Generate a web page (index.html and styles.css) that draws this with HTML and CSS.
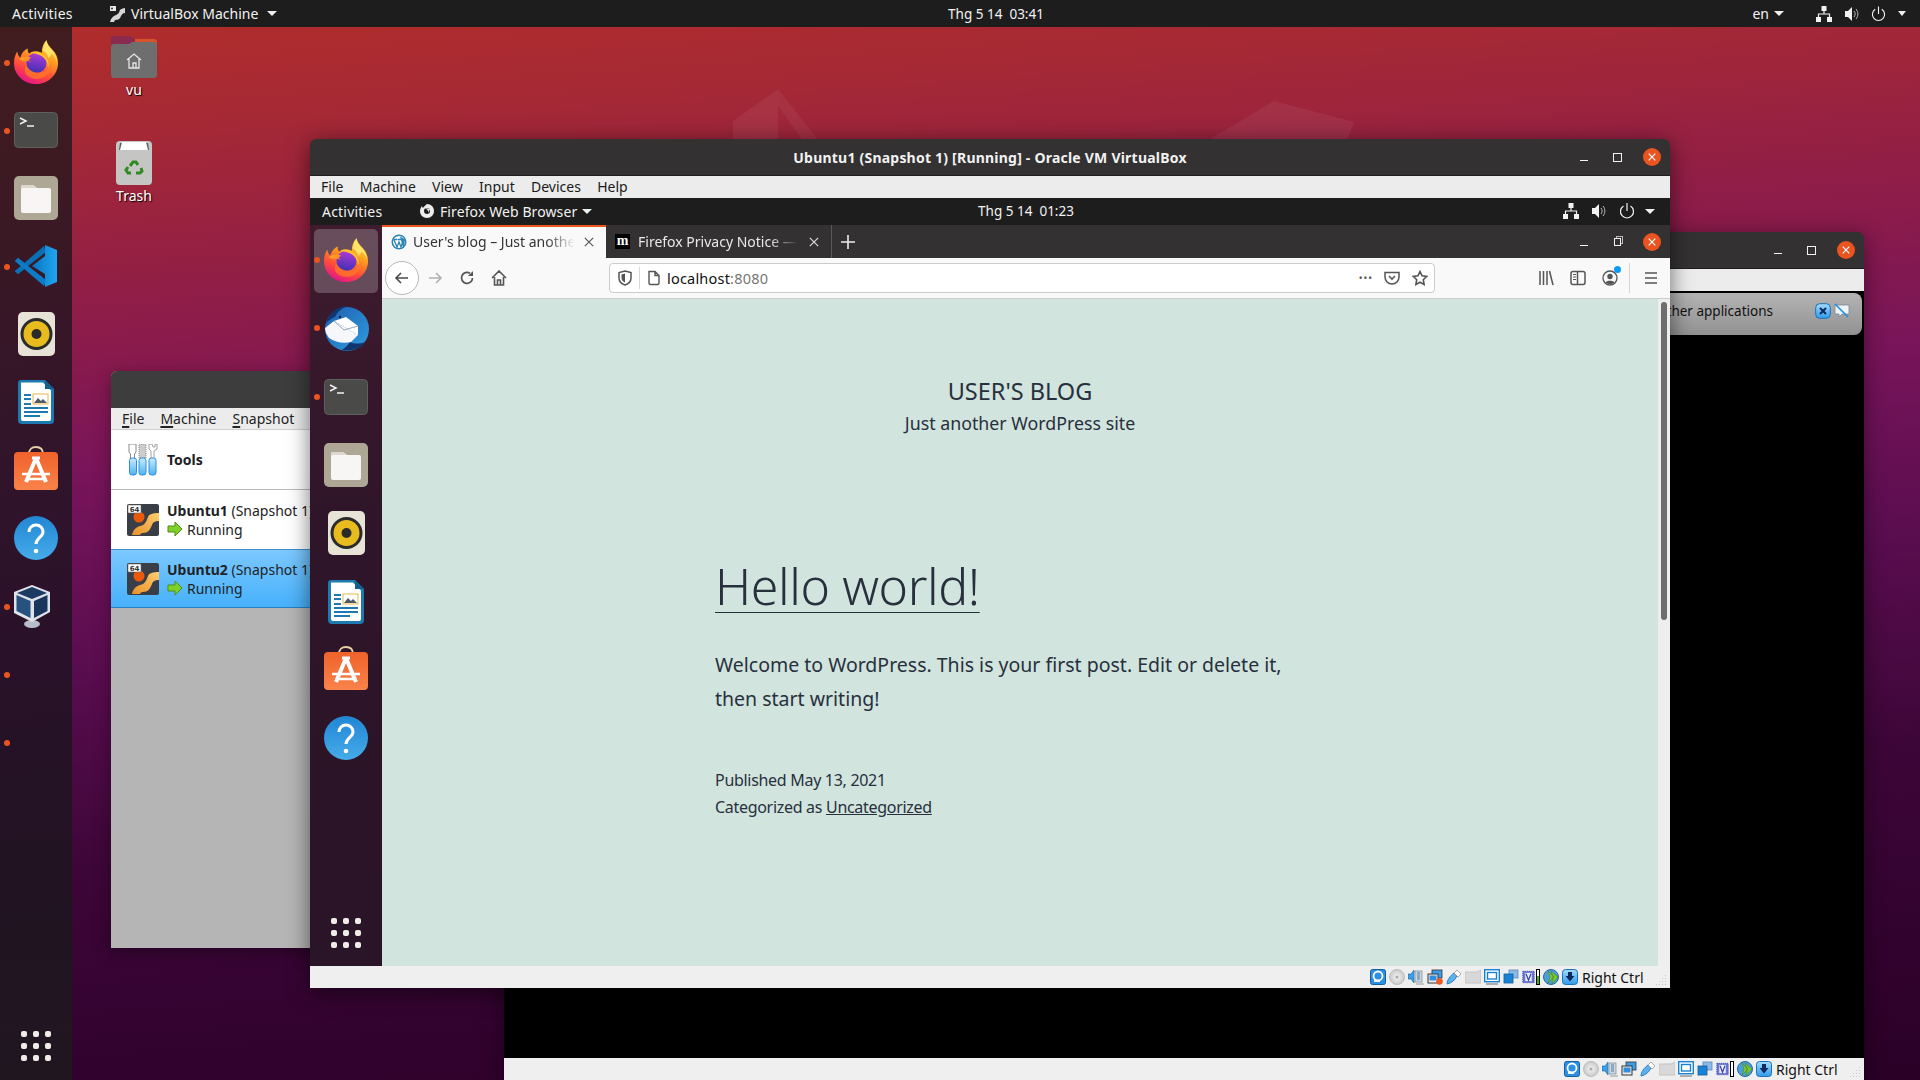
FILE: index.html
```html
<!DOCTYPE html>
<html lang="vi">
<head>
<meta charset="utf-8">
<title>Ubuntu desktop</title>
<link rel="stylesheet" href="styles.css">
</head>
<body>
<svg class="defs" width="0" height="0" aria-hidden="true">
  <defs>
    <linearGradient id="ffBody" x1="0.8" y1="0" x2="0.35" y2="1"><stop offset="0" stop-color="#ffe44d"/><stop offset="0.4" stop-color="#ff9a1f"/><stop offset="0.72" stop-color="#ff4a3c"/><stop offset="1" stop-color="#e31587"/></linearGradient>
    <linearGradient id="ffSwirl" x1="0" y1="0" x2="1" y2="1"><stop offset="0" stop-color="#ffb32b"/><stop offset="1" stop-color="#ff6a22"/></linearGradient>
    <linearGradient id="ffCore" x1="0.6" y1="0" x2="0.4" y2="1"><stop offset="0" stop-color="#b23ad6"/><stop offset="1" stop-color="#3c30b4"/></linearGradient>
    <linearGradient id="tbBird" x1="0" y1="0" x2="1" y2="1"><stop offset="0" stop-color="#1f5fae"/><stop offset="1" stop-color="#2f9de0"/></linearGradient>
    <linearGradient id="gVscode" x1="0" y1="0" x2="1" y2="0"><stop offset="0" stop-color="#0a73bd"/><stop offset="1" stop-color="#1fa6f2"/></linearGradient>
    <linearGradient id="gStore" x1="0" y1="0" x2="0" y2="1"><stop offset="0" stop-color="#f0622c"/><stop offset="1" stop-color="#f9834a"/></linearGradient>
    <linearGradient id="gHelp" x1="0" y1="0" x2="0" y2="1"><stop offset="0" stop-color="#2286d4"/><stop offset="1" stop-color="#45ace9"/></linearGradient>
    <linearGradient id="os" x1="0" y1="1" x2="1" y2="0"><stop offset="0" stop-color="#e8912a"/><stop offset="1" stop-color="#ffcd6e"/></linearGradient>
    <linearGradient id="blueBtn" x1="0" y1="0" x2="0" y2="1"><stop offset="0" stop-color="#a5dbff"/><stop offset="1" stop-color="#2f9bea"/></linearGradient>
    <linearGradient id="tool" x1="0" y1="0" x2="0" y2="1"><stop offset="0" stop-color="#c9ecff"/><stop offset="1" stop-color="#4db3f2"/></linearGradient>
    <radialGradient id="disc"><stop offset="0" stop-color="#f4f4f4"/><stop offset="1" stop-color="#c9c9c9"/></radialGradient>

    <symbol id="firefox" viewBox="0 0 48 48">
      <path fill="url(#ffBody)" d="M24 47C11 47 1 37 1 25c0-5 1.500-9 3.500-12 .5 3 1.500 5 3 6.500C9 15 12 11 15.500 10c-.5 2 0 4 1.500 5 4-2.500 9-2.500 13-.5C30 9 32 4 35 1c.5 4 3 6.500 6 10 4 4 6 9 6 14 0 12-10 22-23 22z"/>
      <circle cx="24.500" cy="25" r="10.500" fill="url(#ffCore)"/>
      <path fill="url(#ffSwirl)" d="M6 21c4-3 10-3 13-1.500-1.500 1-2.500 2-2.500 3 1.500.5 2 1 2 2.500-.5-1.500-1.500-2-3-2C12 23.500 8 22.500 6 21z"/>
      <path fill="#ff7a24" d="M13 36c4 6 13 7 19 4 5-3 9-8 8-15-1 5-5 10-11 10-7 1-12-2-15-7-2 2-2 5-1 8z" opacity=".75"/>
      <path fill="#ffc02e" d="M18 14c5-2 11-1 15 3 3 3 5 8 4 13-1-6-4-11-9-13-4-2-7-2-10-3z"/>
      <path fill="#ffe66a" d="M35 2c.5 4 3 7 6 10 3 4 5 8 5 12-1-4-3-7-6-9-1 3-2 4-3 5-1-5-4-7-6-8 .5-4 2-7 4-10z"/>
    </symbol>
    <symbol id="thunderbird" viewBox="0 0 48 48">
      <circle cx="25" cy="25" r="22" fill="url(#tbBird)"/>
      <path fill="#10356f" d="M4 20c2-11 11-18 22-18-6 2-11 6-13 11-3 1-7 3-9 7zM20 46c8 2 18-1 23-8-5 2-11 2-15 0-2 3-5 6-8 8z"/>
      <path fill="#f5f7fa" d="M3 24l9-7 24 14-7 7c-8 2-16 0-22-4-2-3-4-6-4-10z"/>
      <path fill="#fff" d="M12 17l12-4 12 9v9z"/>
      <path fill="none" stroke="#9ba8b5" stroke-width="1" d="M12 17l10 9 14-4"/>
      <circle cx="18" cy="13" r="1.200" fill="#0a1f40"/>
    </symbol>
    <symbol id="terminal" viewBox="0 0 44 36">
      <rect x="0.500" y="0.500" width="43" height="35" rx="4" fill="#4a4a48" stroke="#5f5f5d"/>
      <path d="M6 6l6 3-6 3" fill="none" stroke="#f2f2f2" stroke-width="1.500"/>
      <path d="M13 14h7" stroke="#f2f2f2" stroke-width="1.500"/>
    </symbol>
    <symbol id="files" viewBox="0 0 44 44">
      <rect width="44" height="44" rx="5" fill="#aea795"/>
      <path d="M7 11a2 2 0 0 1 2-2h10l4 3h12a2 2 0 0 1 2 2v21a2 2 0 0 1-2 2H9a2 2 0 0 1-2-2z" fill="#f8f6f4"/>
      <path d="M7 14a2 2 0 0 1 2-2h13l-3-3H9a2 2 0 0 0-2 2z" fill="#dcd8cf"/>
    </symbol>
    <symbol id="rhythmbox" viewBox="0 0 37 44">
      <rect width="37" height="44" rx="5" fill="#e7e3d7"/>
      <circle cx="18.500" cy="22" r="16" fill="#2b2b2b"/>
      <circle cx="18.500" cy="22" r="13" fill="#e8bc1e"/>
      <circle cx="18.500" cy="22" r="5" fill="#2a2a2a"/>
    </symbol>
    <symbol id="writer" viewBox="0 0 36 44">
      <path d="M3 0h24l9 9v31a4 4 0 0 1-4 4H4a4 4 0 0 1-4-4V3a3 3 0 0 1 3-3z" fill="#1d7ab0"/>
      <path d="M3 2.500h22l8 8V39a2 2 0 0 1-2 2H5a2 2 0 0 1-2-2z" fill="#fff"/>
      <path d="M27 0l9 9h-9z" fill="#13608e"/>
      <rect x="15" y="14" width="15" height="10" fill="#fff" stroke="#e5b84b"/>
      <path d="M16 23l4-5 3 3 2-2 4 4z" fill="#4f5a66"/>
      <path d="M6 15h7M6 19h7M6 24h7M6 28h24M6 32h24M6 36h16" stroke="#1d7ab0" stroke-width="1.800"/>
    </symbol>
    <symbol id="store" viewBox="0 0 44 44">
      <path d="M15 8c0-5 3-7 7-7s7 2 7 7" fill="none" stroke="#e7cfa8" stroke-width="1.800"/>
      <rect y="6" width="44" height="38" rx="4" fill="url(#gStore)"/>
      <path d="M22 12L12 36M22 12l10 24" stroke="#fff" stroke-width="4" fill="none"/>
      <path d="M8 28h28M12 33h20" stroke="#fff" stroke-width="2.400"/>
      <path d="M18 12h8" stroke="#fff" stroke-width="3"/>
    </symbol>
    <symbol id="help" viewBox="0 0 44 44">
      <circle cx="22" cy="22" r="22" fill="url(#gHelp)"/>
      <path d="M15 16c0-4 3-7 7-7s7 3 7 7c0 5-7 6-7 12" fill="none" stroke="#fff" stroke-width="3"/>
      <circle cx="22" cy="35" r="2.300" fill="#fff"/>
    </symbol>
    <symbol id="vscode" viewBox="0 0 42 42">
      <path fill="#0e7ac4" d="M0 16l3-3 10 8-10 8-3-3 6-5z"/>
      <path fill="#0a6fb5" d="M3 29l-3-3L29 1l2 6z"/>
      <path fill="#0c7cc9" d="M3 13l-3 3 29 25 2-6z"/>
      <path fill="url(#gVscode)" d="M30 0l12 5v32l-12 5V29L17 21l13-10z"/>
    </symbol>
    <symbol id="vbox" viewBox="0 0 40 44">
      <ellipse cx="19" cy="40" rx="8" ry="4" fill="#b7bdc9"/>
      <path d="M19 1l18 7v20l-18 10-18-9V8z" fill="#dfe3ea"/>
      <path d="M19 3l15 6-15 6-15-6z" fill="#1d3a63"/>
      <path d="M3.500 11l14 6v17l-14-7z" fill="#27517f"/>
      <path d="M21 17l13.500-6v16L21 34z" fill="#1b365c"/>
    </symbol>
    <symbol id="grid" viewBox="0 0 30 30">
      <g fill="#f0ece8"><rect x="0" y="0" width="6" height="6" rx="2"/><rect x="12" y="0" width="6" height="6" rx="2"/><rect x="24" y="0" width="6" height="6" rx="2"/><rect x="0" y="12" width="6" height="6" rx="2"/><rect x="12" y="12" width="6" height="6" rx="2"/><rect x="24" y="12" width="6" height="6" rx="2"/><rect x="0" y="24" width="6" height="6" rx="2"/><rect x="12" y="24" width="6" height="6" rx="2"/><rect x="24" y="24" width="6" height="6" rx="2"/></g>
    </symbol>
    <symbol id="home-folder" viewBox="0 0 46 42">
      <path d="M3 0h16l4 3h20a3 3 0 0 1 3 3v8H0V3a3 3 0 0 1 3-3z" fill="#8a2a4e"/>
      <path d="M24 3h19a3 3 0 0 1 3 3v6H24z" fill="#d8532a"/>
      <path d="M3 8h15l3-2h22a3 3 0 0 1 3 3v30a3 3 0 0 1-3 3H3a3 3 0 0 1-3-3V11a3 3 0 0 1 3-3z" fill="#6e6e6e"/>
      <path d="M16 24l7-6 7 6M18 23v9h10v-9M22 32v-5h3v5" fill="none" stroke="#e7e7e7" stroke-width="1.300"/>
    </symbol>
    <symbol id="trash" viewBox="0 0 36 44">
      <rect width="36" height="44" rx="4" fill="#c5c5c3"/>
      <path d="M4 2h28l1 7H3z" fill="#5b5b5b"/>
      <path d="M6 1h24l2 8H4z" fill="#fff"/>
      <g fill="none" stroke="#2e8b22" stroke-width="3"><path d="M14 25l3-4h3l2 3"/><path d="M25 27l1 3-2 2h-4"/><path d="M15 32h-3l-2-3 2-3"/></g>
    </symbol>
    <symbol id="tb-tools" viewBox="0 0 32 32">
      <path d="M2 0h7v8l-1.500 2v5h-4v-5L2 8z" fill="#fff" stroke="#8a8a8a"/>
      <rect x="12" y="0" width="7" height="14" fill="#ccc" stroke="#8a8a8a" stroke-dasharray="1 1"/>
      <path d="M22 0v5l2 2v8h3V7l3-2V0l-2 0v3h-2l-1-3z" fill="#fff" stroke="#8a8a8a" stroke-width=".8"/>
      <rect x="2.500" y="14" width="7" height="17" rx="2.500" fill="url(#tool)" stroke="#2f8ed9"/>
      <rect x="12" y="14" width="7" height="17" rx="2.500" fill="url(#tool)" stroke="#2f8ed9"/>
      <rect x="22" y="14" width="7" height="17" rx="2.500" fill="url(#tool)" stroke="#2f8ed9"/>
    </symbol>
    <symbol id="os64" viewBox="0 0 32 32">
      <rect width="32" height="32" rx="2" fill="#3a3f47"/>
      <path d="M5 31c1-5 4-8 8-9 5-1 6-4 8-9 1-3 5-4 11-4v8c-4 0-6 1-7 4-2 5-4 8-9 8-2 0-3 1-3 2z" fill="url(#os)"/>
      <circle cx="12" cy="13" r="5.500" fill="#ea5a0a"/>
      <rect x="1" y="1" width="13" height="8" fill="#fff" stroke="#666" stroke-width=".6"/>
      <text x="7.500" y="7.800" class="os64-label">64</text>
    </symbol>
    <symbol id="run-arrow" viewBox="0 0 16 14">
      <path d="M1 4h7V0l7 7-7 7v-4H1z" fill="#7fd02a" stroke="#4f8f12"/>
    </symbol>
    <symbol id="wp" viewBox="0 0 16 16">
      <circle cx="8" cy="8" r="7.500" fill="#2a84b5"/>
      <circle cx="8" cy="8" r="6" fill="#fff"/>
      <path d="M3 6l3 7 2-5 2 5 2.500-7M2.500 5.500h4M7 5.500h4" fill="none" stroke="#2a84b5" stroke-width="1.300"/>
      <path d="M9 2.500l5 3-1 7-1 1z" fill="#2a84b5"/>
    </symbol>
    <symbol id="close-x" viewBox="0 0 12 12"><path d="M1 1l10 10M11 1L1 11" fill="none" stroke="currentColor" stroke-width="1.400"/></symbol>
    <symbol id="wclose" viewBox="0 0 18 18"><circle cx="9" cy="9" r="9" fill="#e95420"/><path d="M5.700 5.700l6.600 6.600M12.300 5.700l-6.600 6.600" stroke="#fff" stroke-width="1.200"/></symbol>
    <symbol id="net" viewBox="0 0 16 16"><g fill="#f2f2f2"><rect x="5.500" y="0" width="5" height="5"/><rect x="0" y="11" width="5" height="5"/><rect x="11" y="11" width="5" height="5"/></g><path d="M8 5v3M2.500 11V8h11v3" fill="none" stroke="#f2f2f2" stroke-width="1.200"/></symbol>
    <symbol id="sound" viewBox="0 0 16 16"><path d="M1 5h3l4-4v14l-4-4H1z" fill="#f2f2f2"/><path d="M10 5c1.500 2 1.500 4 0 6M12 3c2.500 3 2.500 7 0 10" fill="none" stroke="#bbb" stroke-width="1"/></symbol>
    <symbol id="power" viewBox="0 0 16 16"><path d="M8 0v8" stroke="#f2f2f2" stroke-width="1.200"/><path d="M4.500 3a6.500 6.500 0 1 0 7 0" fill="none" stroke="#f2f2f2" stroke-width="1.200"/></symbol>

    <symbol id="i-back" viewBox="0 0 16 16"><path d="M14 8H2M7 3L2 8l5 5" fill="none" stroke="currentColor" stroke-width="1.600"/></symbol>
    <symbol id="i-fwd" viewBox="0 0 16 16"><path d="M2 8h12M9 3l5 5-5 5" fill="none" stroke="currentColor" stroke-width="1.600"/></symbol>
    <symbol id="i-reload" viewBox="0 0 16 16"><path d="M13.500 8A5.500 5.500 0 1 1 11 3.300" fill="none" stroke="currentColor" stroke-width="1.700"/><path d="M14 1v5h-5z" fill="currentColor"/></symbol>
    <symbol id="i-home" viewBox="0 0 16 16"><path d="M1 8l7-7 7 7M3.500 7v8h9V7M6.500 15v-5h3v5" fill="none" stroke="currentColor" stroke-width="1.600"/></symbol>
    <symbol id="i-shield" viewBox="0 0 16 16"><path d="M8 1l6 1.500V8c0 4-3 6-6 7-3-1-6-3-6-7V2.500z" fill="none" stroke="currentColor" stroke-width="1.500"/><path d="M8 3.500v9c-2-1-3.500-2-3.500-5V4.500z" fill="currentColor"/></symbol>
    <symbol id="i-page" viewBox="0 0 16 16"><path d="M3 1.500h6l4 4V13a1.500 1.500 0 0 1-1.500 1.500h-7A1.500 1.500 0 0 1 3 13zM9 1.500v4h4" fill="none" stroke="currentColor" stroke-width="1.400"/></symbol>
    <symbol id="i-pocket" viewBox="0 0 16 16"><path d="M1 2.500h14V7a7 7 0 0 1-14 0z" fill="none" stroke="currentColor" stroke-width="1.500"/><path d="M5 6l3 3 3-3" fill="none" stroke="currentColor" stroke-width="1.600"/></symbol>
    <symbol id="i-star" viewBox="0 0 16 16"><path d="M8 1.500l2 4.300 4.700.6-3.400 3.300.8 4.700L8 12.200l-4.100 2.200.8-4.700L1.300 6.400 6 5.800z" fill="none" stroke="currentColor" stroke-width="1.600"/></symbol>
    <symbol id="i-library" viewBox="0 0 16 16"><path d="M2 1v14M5.500 1v14M9 1v14M11.500 1l3.500 14" fill="none" stroke="currentColor" stroke-width="1.500"/></symbol>
    <symbol id="i-sidebar" viewBox="0 0 16 16"><rect x="1" y="1.500" width="14" height="13" rx="2" fill="none" stroke="currentColor" stroke-width="1.500"/><path d="M7.500 2v12" stroke="currentColor" stroke-width="1.500"/><path d="M3 4.500h3M3 7h3M3 9.500h3" stroke="currentColor" stroke-width="1.200"/></symbol>
    <symbol id="i-account" viewBox="0 0 16 16"><circle cx="8" cy="8" r="7" fill="none" stroke="currentColor" stroke-width="1.300"/><circle cx="8" cy="6.500" r="2.700" fill="currentColor"/><path d="M3.500 12.500c1-2.500 8-2.500 9 0-2 2-7 2-9 0z" fill="currentColor"/></symbol>
    <symbol id="i-menu" viewBox="0 0 16 16"><path d="M2 3h12M2 8h12M2 13h12" stroke="currentColor" stroke-width="1.700"/></symbol>

    <symbol id="s-hd" viewBox="0 0 16 16"><rect x=".5" y=".5" width="15" height="15" rx="2" fill="#2d8fe3" stroke="#12609f"/><circle cx="8" cy="7" r="4.500" fill="none" stroke="#fff" stroke-width="1.800"/><path d="M4 12h6" stroke="#fff" stroke-width="1.800"/></symbol>
    <symbol id="s-cd" viewBox="0 0 16 16"><circle cx="8" cy="8" r="7.500" fill="url(#disc)" stroke="#bdbdbd"/><circle cx="8" cy="8" r="1.500" fill="#aaa"/></symbol>
    <symbol id="s-audio" viewBox="0 0 16 16"><path d="M0 5h3l3-4v13l-3-4H0z" fill="#3d9ee8" stroke="#1768a8" stroke-width=".6"/><rect x="7" y="2" width="7" height="11" fill="#c9d7e3" stroke="#7b8a96" stroke-width=".7"/><path d="M9 4h3M9 6h3M9 8h3M9 10h3" stroke="#5d7a92"/><path d="M8 15h8" stroke="#999"/></symbol>
    <symbol id="s-net" viewBox="0 0 16 16"><rect x="5" y="1" width="10" height="8" fill="#3d9ee8" stroke="#333" stroke-width=".8"/><rect x="1" y="5" width="10" height="9" fill="#eee" stroke="#333"/><rect x="2.500" y="6.500" width="7" height="5" fill="#2f8ee0"/></symbol>
    <symbol id="s-net-on" viewBox="0 0 16 16"><use href="#s-net"/><circle cx="12.500" cy="12.500" r="3.300" fill="#ee5a24"/></symbol>
    <symbol id="s-usb" viewBox="0 0 16 16"><path d="M1 15c0-4 3-8 7-11l3 3c-2 4-5 7-10 8z" fill="#5cb0ef" stroke="#1b6eb2" stroke-width=".8"/><path d="M8 4l3-3 4 4-3 3z" fill="#fff" stroke="#888" stroke-width=".7"/></symbol>
    <symbol id="s-folder" viewBox="0 0 16 16"><path d="M0 3h12l4-2v13H0z" fill="#d8d8d8" stroke="#c4c4c4"/></symbol>
    <symbol id="s-display" viewBox="0 0 16 16"><rect x=".7" y=".7" width="14.600" height="12" fill="#fff" stroke="#1a82d4" stroke-width="1.400"/><rect x="3.500" y="3.500" width="9" height="6.500" fill="#fff" stroke="#1a82d4" stroke-width="1.400"/><path d="M2 15h12" stroke="#999" stroke-width="1.500"/></symbol>
    <symbol id="s-multi" viewBox="0 0 16 16"><rect x="6" y="1" width="9" height="8" fill="#8db9e8" stroke="#5a87ba" stroke-width=".8"/><rect x="1" y="5" width="9" height="9" fill="#1a82d4" stroke="#0f5d9d" stroke-width=".8"/></symbol>
    <symbol id="s-v" viewBox="0 0 16 16"><rect x="1" y="1" width="14" height="14" fill="#6a77d8" stroke="#3743a5" stroke-dasharray="1.500 1"/><rect x="4" y="3" width="8" height="10" fill="#eef"/><path d="M5 4l3 8 3-8" fill="none" stroke="#3743a5" stroke-width="1.500"/></symbol>
    <symbol id="s-globe" viewBox="0 0 16 16"><circle cx="8" cy="8" r="7.500" fill="#4b9fdc" stroke="#22699f"/><path d="M5 2l6 6-6 6 2-6zM8 2l7 6-6 7 1-7z" fill="#79c63a" stroke="#3f7f14" stroke-width=".5"/></symbol>
    <symbol id="s-down" viewBox="0 0 16 16"><rect x=".5" y=".5" width="15" height="15" rx="3" fill="url(#blueBtn)" stroke="#1a72b8"/><path d="M6 3h4v4h2.500L8 12.500 3.500 7H6z" fill="#0f2a5e"/></symbol>
    <symbol id="grip" viewBox="0 0 12 12"><g fill="#c6c6c6"><rect x="10" y="1" width="1" height="1"/><rect x="7" y="4" width="1" height="1"/><rect x="10" y="4" width="1" height="1"/><rect x="4" y="7" width="1" height="1"/><rect x="7" y="7" width="1" height="1"/><rect x="10" y="7" width="1" height="1"/><rect x="1" y="10" width="1" height="1"/><rect x="4" y="10" width="1" height="1"/><rect x="7" y="10" width="1" height="1"/><rect x="10" y="10" width="1" height="1"/></g></symbol>
  </defs>
</svg>

<div class="screen">
  <svg class="wall-shapes" viewBox="0 0 1920 1080" aria-hidden="true">
    <path d="M733 121L778 89V145H733z" fill="#fff" opacity=".06"/>
    <path d="M778 89L822 145H806L778 106z" fill="#fff" opacity=".05"/>
    <path d="M1274 101L1354 122 1345 145H1200z" fill="#fff" opacity=".06"/>
  </svg>

  <header class="topbar">
    <span class="tb-activities">Activities</span>
    <span class="tb-app">
      <svg class="tb-app-icon" viewBox="0 0 16 16"><path d="M1 0h6v5H1z" fill="#e8e8e8"/><path d="M1 16c1-4 3-6 6-7 3-1 3-3 4-5 1-1 3-2 5-2v5c-2 0-3 1-4 3-1 3-3 4-6 4l-1 2z" fill="#d5d5d5"/><circle cx="3" cy="2.500" r="1" fill="#333"/></svg>
      VirtualBox Machine<i class="caret"></i>
    </span>
    <span class="tb-clock">Thg 5 14&nbsp; 03:41</span>
    <span class="tb-right">
      <span class="tb-lang">en<i class="caret"></i></span>
      <svg class="tray tray-net"><use href="#net"/></svg>
      <svg class="tray tray-sound"><use href="#sound"/></svg>
      <svg class="tray tray-power"><use href="#power"/></svg>
      <i class="caret tray-caret"></i>
    </span>
  </header>

  <div class="workspace">
    <nav class="dock">
      <div class="slot running"><svg class="ic ic-ff"><use href="#firefox"/></svg></div>
      <div class="slot running"><svg class="ic ic-term"><use href="#terminal"/></svg></div>
      <div class="slot"><svg class="ic ic-44"><use href="#files"/></svg></div>
      <div class="slot running"><svg class="ic ic-42"><use href="#vscode"/></svg></div>
      <div class="slot"><svg class="ic ic-rb"><use href="#rhythmbox"/></svg></div>
      <div class="slot"><svg class="ic ic-wr"><use href="#writer"/></svg></div>
      <div class="slot"><svg class="ic ic-44 ic-store"><use href="#store"/></svg></div>
      <div class="slot"><svg class="ic ic-44"><use href="#help"/></svg></div>
      <div class="slot running slot-vbox"><svg class="ic ic-vb"><use href="#vbox"/></svg></div>
      <div class="slot running"></div>
      <div class="slot running"></div>
      <div class="dock-apps"><svg class="ic ic-grid"><use href="#grid"/></svg></div>
    </nav>

    <div class="canvas">
      <div class="desk-icon desk-home">
        <svg class="desk-home-ic"><use href="#home-folder"/></svg>
        <span class="desk-label">vu</span>
      </div>
      <div class="desk-icon desk-trash">
        <svg class="desk-trash-ic"><use href="#trash"/></svg>
        <span class="desk-label">Trash</span>
      </div>

      <!-- VirtualBox manager, behind the main VM window -->
      <section class="win win-manager">
        <div class="mgr-title"></div>
        <div class="mgr-menu">
          <span><u>F</u>ile</span><span><u>M</u>achine</span><span><u>S</u>napshot</span>
        </div>
        <div class="mgr-tools">
          <svg class="mgr-ic"><use href="#tb-tools"/></svg><b>Tools</b>
        </div>
        <div class="mgr-vm">
          <svg class="mgr-ic"><use href="#os64"/></svg>
          <div class="mgr-vm-text">
            <div class="mgr-vm-name"><b>Ubuntu1</b> (Snapshot 1)</div>
            <div class="mgr-vm-state"><svg class="run-ic"><use href="#run-arrow"/></svg>Running</div>
          </div>
        </div>
        <div class="mgr-vm mgr-vm-sel">
          <svg class="mgr-ic"><use href="#os64"/></svg>
          <div class="mgr-vm-text">
            <div class="mgr-vm-name"><b>Ubuntu2</b> (Snapshot 1)</div>
            <div class="mgr-vm-state"><svg class="run-ic"><use href="#run-arrow"/></svg>Running</div>
          </div>
        </div>
        <div class="mgr-empty"></div>
      </section>

      <!-- Second VM window, behind the main VM window -->
      <section class="win win-back">
        <div class="win-title">
          <span class="win-btns">
            <i class="btn-min"></i><i class="btn-max"></i><svg class="btn-close"><use href="#wclose"/></svg>
          </span>
        </div>
        <div class="vm-menu"></div>
        <div class="back-body">
          <div class="back-note">
            <span>other applications</span>
            <span class="note-icons">
              <svg class="note-x" viewBox="0 0 16 16"><rect x=".7" y=".7" width="14.600" height="14.600" rx="4" fill="url(#blueBtn)" stroke="#1a72b8"/><path d="M5 5l6 6M11 5l-6 6" stroke="#0f2a5e" stroke-width="2"/></svg>
              <svg class="note-msg" viewBox="0 0 16 16"><path d="M1 2h14v9H8l-3 3v-3H1z" fill="#eef3f8" stroke="#7c8791" stroke-width=".8"/><path d="M1 1l13 13" stroke="#1d8ee0" stroke-width="1.600"/></svg>
            </span>
          </div>
        </div>
        <div class="status">
          <svg class="st"><use href="#s-hd"/></svg><svg class="st"><use href="#s-cd"/></svg><svg class="st"><use href="#s-audio"/></svg><svg class="st"><use href="#s-net"/></svg><svg class="st"><use href="#s-usb"/></svg><svg class="st"><use href="#s-folder"/></svg><svg class="st"><use href="#s-display"/></svg><svg class="st"><use href="#s-multi"/></svg><span class="st-v"><svg class="st-vi"><use href="#s-v"/></svg><i class="st-bar"></i></span><svg class="st"><use href="#s-globe"/></svg><svg class="st"><use href="#s-down"/></svg>
          <span class="st-text">Right Ctrl</span>
          <svg class="st-grip"><use href="#grip"/></svg>
        </div>
      </section>

      <!-- Main VM window -->
      <section class="win win-main">
        <div class="win-title">
          <span class="win-title-text">Ubuntu1 (Snapshot 1) [Running] - Oracle VM VirtualBox</span>
          <span class="win-btns">
            <i class="btn-min"></i><i class="btn-max"></i><svg class="btn-close"><use href="#wclose"/></svg>
          </span>
        </div>
        <div class="vm-menu">
          <span>File</span><span>Machine</span><span>View</span><span>Input</span><span>Devices</span><span>Help</span>
        </div>

        <div class="guest">
          <div class="guest-panel">
            <span class="gp-activities">Activities</span>
            <span class="gp-app">
              <svg class="gp-app-ic" viewBox="0 0 16 16"><path d="M8 1c4 0 7 3 7 7s-3 7-7 7-7-3-7-7c0-2 1-4 2-5 0 1 1 2 1 2 1-2 3-3 4-4z" fill="#eee"/><circle cx="8" cy="8" r="3" fill="#1d1d1d"/><path d="M6 5l5 1-2 4c1-2-1-4-3-5z" fill="#eee"/></svg>
              Firefox Web Browser<i class="caret"></i>
            </span>
            <span class="gp-clock">Thg 5 14&nbsp; 01:23</span>
            <span class="gp-right">
              <svg class="tray"><use href="#net"/></svg>
              <svg class="tray"><use href="#sound"/></svg>
              <svg class="tray"><use href="#power"/></svg>
              <i class="caret"></i>
            </span>
          </div>

          <div class="guest-body">
            <nav class="gdock">
              <div class="gslot running active"><svg class="ic ic-ff"><use href="#firefox"/></svg></div>
              <div class="gslot running"><svg class="ic ic-tb"><use href="#thunderbird"/></svg></div>
              <div class="gslot running"><svg class="ic ic-term"><use href="#terminal"/></svg></div>
              <div class="gslot"><svg class="ic ic-44"><use href="#files"/></svg></div>
              <div class="gslot"><svg class="ic ic-rb"><use href="#rhythmbox"/></svg></div>
              <div class="gslot"><svg class="ic ic-wr"><use href="#writer"/></svg></div>
              <div class="gslot"><svg class="ic ic-44 ic-store"><use href="#store"/></svg></div>
              <div class="gslot"><svg class="ic ic-44"><use href="#help"/></svg></div>
              <div class="gdock-apps"><svg class="ic ic-grid"><use href="#grid"/></svg></div>
            </nav>

            <div class="browser">
              <div class="tabbar">
                <div class="tab tab-active">
                  <svg class="tab-ic"><use href="#wp"/></svg>
                  <span class="tab-text">User's blog – Just another</span>
                  <svg class="tab-close"><use href="#close-x"/></svg>
                </div>
                <div class="tab tab-idle">
                  <span class="moz">m</span>
                  <span class="tab-text">Firefox Privacy Notice —</span>
                  <svg class="tab-close"><use href="#close-x"/></svg>
                </div>
                <svg class="tab-new" viewBox="0 0 14 14"><path d="M7 0v14M0 7h14" stroke="#eee" stroke-width="1.600"/></svg>
                <span class="win-btns browser-btns">
                  <i class="btn-min"></i><i class="btn-restore"></i><svg class="btn-close"><use href="#wclose"/></svg>
                </span>
              </div>

              <div class="toolbar">
                <span class="nav-back"><svg class="tbi"><use href="#i-back"/></svg></span>
                <svg class="tbi tbi-fwd"><use href="#i-fwd"/></svg>
                <svg class="tbi tbi-reload"><use href="#i-reload"/></svg>
                <svg class="tbi tbi-home"><use href="#i-home"/></svg>
                <div class="urlbar">
                  <svg class="tbi"><use href="#i-shield"/></svg>
                  <i class="url-sep"></i>
                  <svg class="tbi tbi-page"><use href="#i-page"/></svg>
                  <span class="url-text">localhost<span class="url-port">:8080</span></span>
                  <span class="url-dots">•••</span>
                  <svg class="tbi"><use href="#i-pocket"/></svg>
                  <svg class="tbi tbi-star"><use href="#i-star"/></svg>
                </div>
                <div class="tools-right">
                  <svg class="tbi"><use href="#i-library"/></svg>
                  <svg class="tbi"><use href="#i-sidebar"/></svg>
                  <span class="acct"><svg class="tbi"><use href="#i-account"/></svg><i class="acct-dot"></i></span>
                  <i class="tools-sep"></i>
                  <svg class="tbi"><use href="#i-menu"/></svg>
                </div>
              </div>

              <div class="viewport">
                <main class="page">
                  <header class="site-head">
                    <div class="site-name">USER'S BLOG</div>
                    <div class="site-tag">Just another WordPress site</div>
                  </header>
                  <article class="post">
                    <h1 class="post-title"><a href="#">Hello world!</a></h1>
                    <p class="post-body">Welcome to WordPress. This is your first post. Edit or delete it,<br>then start writing!</p>
                    <p class="post-meta">Published May 13, 2021<br>Categorized as <a href="#">Uncategorized</a></p>
                  </article>
                </main>
                <div class="scrollbar"><i class="thumb"></i></div>
              </div>
            </div>
          </div>
        </div>

        <div class="status">
          <svg class="st"><use href="#s-hd"/></svg><svg class="st"><use href="#s-cd"/></svg><svg class="st"><use href="#s-audio"/></svg><svg class="st"><use href="#s-net-on"/></svg><svg class="st"><use href="#s-usb"/></svg><svg class="st"><use href="#s-folder"/></svg><svg class="st"><use href="#s-display"/></svg><svg class="st"><use href="#s-multi"/></svg><span class="st-v"><svg class="st-vi"><use href="#s-v"/></svg><i class="st-bar st-bar-on"></i></span><svg class="st"><use href="#s-globe"/></svg><svg class="st"><use href="#s-down"/></svg>
          <span class="st-text">Right Ctrl</span>
          <svg class="st-grip"><use href="#grip"/></svg>
        </div>
      </section>
    </div>
  </div>
</div>
</body>
</html>
```
FILE: styles.css
```css
* { box-sizing: border-box; }
html, body { margin: 0; padding: 0; }
body { font-family: "Noto Sans", "Open Sans", sans-serif; font-size: 14px; color: #222; overflow: hidden; }
.defs { position: absolute; }
i { display: block; font-style: normal; }
svg { display: block; flex: none; }
.os64-label { font: 700 7px "DejaVu Sans", sans-serif; fill: #333; text-anchor: middle; }

.screen {
  position: relative;
  width: 1920px; height: 1080px; overflow: hidden;
  display: flex; flex-direction: column;
  background: linear-gradient(176deg, #b32e28 0%, #a42836 12%, #8d1c49 27%, #77145a 40%, #5a0d4f 55%, #3d0638 72%, #2a0027 100%);
}
.wall-shapes { position: absolute; inset: 0; width: 1920px; height: 1080px; }

.caret { width: 0; height: 0; border-left: 5px solid transparent; border-right: 5px solid transparent; border-top: 5px solid #f0f0f0; }

/* top panel */
.topbar { position: relative; height: 27px; flex: none; background: #1d1d1d; color: #f2f2f2; display: flex; align-items: center; padding-left: 12px; font-size: 14px; z-index: 1; }
.tb-activities { width: 97px; letter-spacing: .25px; }
.tb-app { display: flex; align-items: center; gap: 6px; }
.tb-app-icon { width: 16px; height: 16px; }
.tb-app .caret { margin-left: 3px; }
.tb-clock { position: absolute; left: 936px; width: 120px; text-align: center; font-size: 13.500px; }
.tb-right { margin-left: auto; display: flex; align-items: center; padding-right: 14px; }
.tb-lang { display: flex; align-items: center; gap: 5px; margin-right: 32px; }
.tray { width: 16px; height: 16px; }
.tray-net { margin-right: 12px; }
.tray-sound { margin-right: 11px; }
.tray-power { margin-right: 12px; width: 15px; }
.tray-caret { border-left-width: 4px; border-right-width: 4px; }

/* workspace */
.workspace { flex: 1; display: flex; min-height: 0; }
.dock { width: 72px; flex: none; display: flex; flex-direction: column; padding-top: 1px; background: linear-gradient(180deg, rgba(34,24,28,.78), rgba(26,18,30,.78) 60%, rgba(30,24,30,.9)); }
.slot { position: relative; height: 68px; flex: none; display: flex; align-items: center; justify-content: center; }
.slot.running::before { content: ""; position: absolute; left: 4px; top: 50%; width: 6px; height: 6px; margin-top: -2px; border-radius: 50%; background: #e95420; }
.slot-vbox { padding-right: 6px; }
.dock-apps { margin-top: auto; height: 49px; display: flex; justify-content: center; }
.ic-ff { width: 46px; height: 46px; }
.ic-tb { width: 48px; height: 48px; }
.ic-term { width: 44px; height: 36px; }
.ic-44 { width: 44px; height: 44px; }
.ic-store { margin-bottom: 4px; }
.ic-42 { width: 42px; height: 42px; }
.ic-rb { width: 37px; height: 44px; }
.ic-wr { width: 36px; height: 44px; }
.ic-vb { width: 40px; height: 44px; }
.ic-grid { width: 30px; height: 30px; }

.canvas { flex: 1; }

/* desktop icons */
.desk-icon { position: absolute; display: flex; flex-direction: column; align-items: center; color: #fff; text-shadow: 1px 1px 1px #000; font-size: 14px; }
.desk-home { left: 100px; top: 36px; width: 68px; }
.desk-trash { left: 100px; top: 141px; width: 68px; }
.desk-home-ic { width: 46px; height: 42px; }
.desk-trash-ic { width: 36px; height: 44px; }
.desk-label { margin-top: 1px; line-height: 20px; }
.desk-home .desk-label { margin-top: 2px; }

/* windows */
.win { position: absolute; display: flex; flex-direction: column; border-radius: 6px 6px 0 0; overflow: hidden; }
.win-title { position: relative; flex: none; height: 37px; background: #333131; color: #f2f2f2; display: flex; align-items: center; justify-content: center; font-weight: 700; font-size: 14px; letter-spacing: .22px; border-bottom: 1px solid #1e1e1e; }
.win-btns { position: absolute; right: 9px; top: 0; height: 36px; display: flex; align-items: center; }
.btn-min { width: 8px; height: 1px; background: #f2f2f2; margin: 7px 15px 0 0; }
.btn-max { width: 9px; height: 9px; border: 1px solid #f2f2f2; margin-right: 21px; margin-left: 10px; }
.btn-close { width: 18px; height: 18px; }
.btn-restore { width: 7px; height: 8px; border: 1px solid #f2f2f2; margin-left: 11px; margin-right: 22px; box-shadow: 2px -2px 0 -1px #333131, 2px -2px 0 0 #bbb; }

.win-main { left: 310px; top: 139px; width: 1360px; height: 849px; box-shadow: 0 4px 22px rgba(0,0,0,.55); }
.win-back { left: 504px; top: 232px; width: 1360px; height: 848px; box-shadow: 0 4px 22px rgba(0,0,0,.45); }
.win-manager { left: 111px; top: 371px; width: 320px; height: 577px; background: #b5b5b5; box-shadow: 0 4px 16px rgba(0,0,0,.35); }

.vm-menu { flex: none; height: 22px; padding-bottom: 2px; background: #ececec; display: flex; align-items: center; gap: 16.300px; padding-left: 11px; font-size: 14px; color: #1a1a1a; }

/* manager */
.mgr-title { height: 37px; flex: none; background: #3d3d3d; }
.mgr-menu { height: 22px; flex: none; background: #ececec; display: flex; align-items: center; padding-left: 11px; gap: 16px; color: #222; border-bottom: 1px solid #cfcfcf; font-size: 14px; }
.mgr-menu u { text-decoration-thickness: 2px; text-underline-offset: 2px; }
.mgr-tools { height: 60px; flex: none; background: #fff; display: flex; align-items: center; gap: 8px; padding-left: 16px; border-bottom: 1px solid #bbb; font-size: 14px; }
.mgr-ic { width: 32px; height: 32px; }
.mgr-vm { height: 59px; flex: none; background: #fff; display: flex; align-items: center; gap: 8px; padding-left: 16px; font-size: 14px; white-space: nowrap; }
.mgr-vm-sel { background: linear-gradient(180deg, #7cc8ff, #46b1fb); border-top: 1px solid #3d8fcc; border-bottom: 1px solid #2b80bf; }
.mgr-vm-name, .mgr-vm-state { line-height: 19px; }
.mgr-vm-state { display: flex; align-items: center; gap: 4px; }
.run-ic { width: 16px; height: 14px; }
.mgr-empty { flex: 1; background: #b5b5b5; }

/* back window */
.back-body { flex: 1; background: #000; padding: 2px 2px 0 0; }
.back-note { height: 42px; margin-left: 100px; padding-bottom: 7px; border-radius: 0 8px 8px 0; background: linear-gradient(180deg, #b4b4b4, #919191); display: flex; align-items: center; justify-content: flex-end; color: #111; font-size: 13.500px; padding-right: 12px; gap: 42px; }
.note-icons { display: flex; gap: 3px; }
.note-x { width: 16px; height: 16px; }
.note-msg { width: 16px; height: 16px; }

/* guest */
.guest { flex: 1; min-height: 0; display: flex; flex-direction: column; }
.guest-panel { position: relative; flex: none; height: 27px; background: #1d1d1d; color: #f2f2f2; display: flex; align-items: center; padding-left: 12px; padding-bottom: 1px; font-size: 14px; }
.gp-activities { width: 97px; letter-spacing: .2px; }
.gp-app { display: flex; align-items: center; gap: 5px; letter-spacing: .1px; }
.gp-app-ic { width: 16px; height: 16px; }
.gp-app .caret { margin-left: 0; }
.gp-clock { position: absolute; left: 650px; width: 132px; text-align: center; font-size: 13.500px; }
.gp-right { margin-left: auto; display: flex; align-items: center; gap: 12px; padding-right: 15px; }
.gp-right .caret { margin-left: -2px; }

.guest-body { flex: 1; min-height: 0; display: flex; }
.gdock { width: 72px; flex: none; display: flex; flex-direction: column; padding-top: 1px; background: linear-gradient(180deg, #3f1b2e, #2f1529 40%, #2a1427); }
.gslot { position: relative; height: 68.300px; flex: none; display: flex; align-items: center; justify-content: center; }
.gslot.active::after { content: ""; position: absolute; left: 4px; right: 4px; top: 3px; bottom: 1px; border-radius: 5px; background: rgba(255,255,255,.22); z-index: 0; }
.gslot svg { position: relative; z-index: 1; }
.gslot.running::before { content: ""; position: absolute; left: 4px; top: 50%; width: 6px; height: 6px; margin-top: -3px; border-radius: 50%; background: #e95420; z-index: 2; }
.gdock-apps { margin-top: auto; height: 48px; display: flex; justify-content: center; }

.browser { flex: 1; min-width: 0; display: flex; flex-direction: column; }
.tabbar { position: relative; flex: none; height: 33px; background: #333131; display: flex; align-items: stretch; }
.tab { display: flex; align-items: center; padding: 0 9px; font-size: 14px; gap: 6px; }
.tab-active { width: 224px; background: #f9f9fa; color: #333; border-top: 2px solid #e95420; padding-bottom: 2px; }
.tab-idle { width: 226px; color: #e8e8e8; border-right: 1px solid #5a5858; gap: 8px; }
.tab-ic { width: 16px; height: 16px; }
.moz { width: 15px; height: 15px; flex: none; background: #000; color: #fff; font: 700 14px/13px "Liberation Serif", serif; text-align: center; }
.tab-text { flex: 1; white-space: nowrap; overflow: hidden; min-width: 0; -webkit-mask-image: linear-gradient(90deg, #000 82%, transparent 100%); mask-image: linear-gradient(90deg, #000 82%, transparent 100%); }
.tab-close { width: 10px; height: 10px; color: #555; margin-left: 3px; margin-right: 3px; }
.tab-idle .tab-close { color: #ddd; }
.tab-new { width: 14px; height: 14px; align-self: center; margin-left: 9px; }
.browser-btns { height: 33px; }

.toolbar { flex: none; height: 41px; background: #f9f9fa; border-bottom: 1px solid #ccc; display: flex; align-items: center; color: #555; }
.tbi { width: 16px; height: 16px; }
.nav-back { width: 34px; height: 34px; margin-left: 3px; border: 1px solid #b8b8b8; border-radius: 50%; background: #fff; display: flex; align-items: center; justify-content: center; color: #4a4a4a; }
.tbi-fwd { margin-left: 8px; color: #b1b1b3; }
.tbi-reload { margin-left: 16px; }
.tbi-home { margin-left: 16px; }
.urlbar { width: 826px; height: 30px; margin-left: 102px; background: #fff; border: 1px solid #ccc; border-radius: 4px; display: flex; align-items: center; padding: 0 6px 0 7px; }
.url-sep { width: 1px; height: 22px; background: #d8d8d8; margin: 0 6px; }
.url-text { margin-left: 5px; font-size: 14.500px; letter-spacing: .2px; color: #111; }
.url-port { color: #777; }
.url-dots { margin-left: auto; font-size: 10px; letter-spacing: 1px; color: #555; margin-right: 11px; }
.tbi-star { margin-left: 12px; }
.tools-right { margin-left: 103px; display: flex; align-items: center; gap: 16px; }
.acct { position: relative; }
.acct-dot { position: absolute; right: -3px; top: -4px; width: 7px; height: 7px; border-radius: 50%; background: #0a9cf3; }
.tools-sep { width: 1px; height: 30px; background: #d4d4d4; margin: 0 -3px 0 -5px; }

.viewport { flex: 1; min-height: 0; display: flex; background: #d1e4dd; }
.page { flex: 1; min-width: 0; color: #28303d; }
.site-head { text-align: center; padding-top: 77px; }
.site-name { font-size: 23.500px; line-height: 30px; }
.site-tag { font-size: 17.800px; line-height: 24px; margin-top: 5px; }
.post { width: 610px; margin: 0 auto; padding-top: 121px; }
.post-title { margin: 0; font-size: 50px; font-weight: 350; line-height: 60px; letter-spacing: -.4px; }
.post-title a { color: inherit; text-decoration: underline; text-decoration-thickness: 1px; text-underline-offset: 7px; }
.post-body { margin: 32px 0 0; font-size: 19.500px; line-height: 34px; }
.post-meta { margin: 51px 0 0; font-size: 16px; line-height: 27px; letter-spacing: -.3px; }
.post-meta a { color: inherit; }
.scrollbar { width: 12px; flex: none; background: #eeeeee; padding: 3px 3px 0; }
.thumb { height: 318px; width: 6px; border-radius: 3px; background: #6e6e6e; }

/* status bar */
.status { flex: none; height: 22px; background: #efefef; display: flex; align-items: center; padding-right: 3px; padding-left: 1060px; color: #111; font-size: 14px; }
.st { width: 16px; height: 16px; margin-right: 3px; }
.st-v { display: flex; align-items: center; margin-right: 3px; }
.st-vi { width: 13px; height: 16px; }
.st-bar { width: 4px; height: 16px; border: 1px solid #000; background: #fff; margin-left: 1px; }
.st-bar-on { background: linear-gradient(180deg, #fff 45%, #3fb50a 45%); }
.st-text { margin-left: 1px; white-space: nowrap; }
.st-grip { width: 12px; height: 12px; margin-left: auto; align-self: flex-end; margin-bottom: 2px; }
```
